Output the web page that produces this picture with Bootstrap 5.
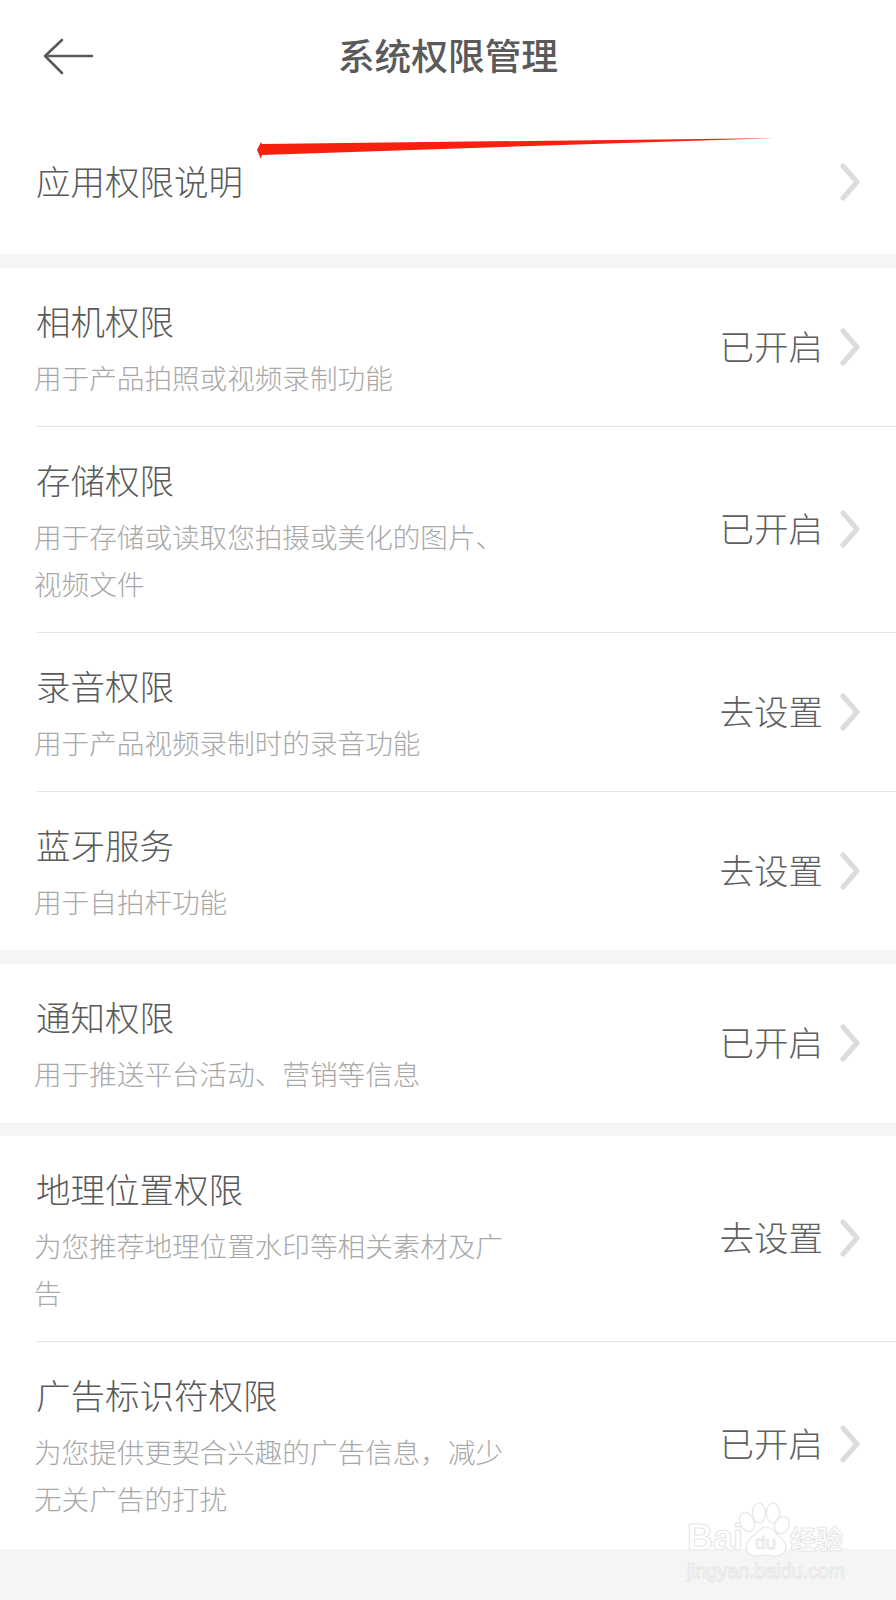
<!DOCTYPE html>
<html lang="zh-CN">
<head>
<meta charset="utf-8">
<title>系统权限管理</title>
<link href="https://cdn.jsdelivr.net/npm/bootstrap@5.3.0/dist/css/bootstrap.min.css" rel="stylesheet">
<style>
html,body{margin:0;background:#f5f5f5;}
body{font-family:"Noto Sans CJK SC","Liberation Sans",sans-serif;width:896px;height:1600px;position:relative;overflow:hidden;}
.hdr{height:112px;background:#fff;position:relative;}
.hdr-title{font-size:36.7px;font-weight:500;color:#5a5a5a;line-height:108px;text-align:center;}
.hdr-back{position:absolute;left:43px;top:38px;}
.grp{background:#fff;margin-bottom:14px;}
.grp-tight{margin-bottom:13px;}
.grp-last{margin-bottom:0;}
.rw{margin-left:37px;padding:28px 35px 25px 0;border-bottom:1px solid #e2e2e2;}
.rw:last-child{border-bottom:0;padding-bottom:25px;}
.grp-tight .rw:last-child{padding-bottom:26px;}
.grp-last .rw:last-child{padding-bottom:27px;}
.rw-plain,.rw-plain:last-child{height:142px;padding:0 35px 6px 0;border:0;}
.rw-name{font-size:34.5px;line-height:48px;color:#5a5a5a;font-weight:300;margin-left:-1px;}
.rw-sub{font-size:27.6px;line-height:47px;color:#a8a8a8;margin-top:10px;margin-left:-3px;width:482px;font-weight:300;}
.rw-end{margin-bottom:8px;}
.rw-end .chev,.rw-plain .chev{margin-top:4px;}
.rw-val{font-size:34.5px;color:#5f5f5f;font-weight:300;white-space:nowrap;margin-right:14px;line-height:48px;}
.chev{display:block;flex:none;}
.mark-arrow{position:absolute;left:0;top:0;pointer-events:none;}
.wm{position:absolute;left:680px;top:1500px;width:216px;height:100px;pointer-events:none;}
.wm-t{position:absolute;color:#fff;-webkit-text-stroke:1px #e6e6e6;font-family:"Liberation Sans",sans-serif;line-height:1;white-space:nowrap;}
.wm-bai{left:7px;top:20px;font-size:36px;font-weight:700;}
.wm-du{left:75px;top:33px;font-size:19px;}
.wm-cn{left:110px;top:25px;font-size:26.5px;font-weight:700;font-family:"Noto Sans CJK SC",sans-serif;}
.wm-url{left:7px;top:62px;font-size:19.6px;}
</style>
</head>
<body>
<header class="hdr">
  <svg class="hdr-back" width="52" height="38" viewBox="0 0 52 38" fill="none" stroke="#5a5a5a" stroke-width="2.6" stroke-linecap="round" stroke-linejoin="round"><path d="M19 2 2 18 19 35M2 18H49"/></svg>
  <div class="hdr-title">系统权限管理</div>
</header>

<section class="grp">
  <div class="rw rw-plain d-flex align-items-center justify-content-between">
    <div class="rw-name">应用权限说明</div>
    <svg class="chev" width="24" height="38" viewBox="0 0 24 38" fill="none" stroke="#dcdcdc" stroke-width="5" stroke-linecap="round" stroke-linejoin="round"><path d="M6 3 20 19 6 35"/></svg>
  </div>
</section>

<section class="grp">
  <div class="rw d-flex align-items-center justify-content-between">
    <div><div class="rw-name">相机权限</div><div class="rw-sub">用于产品拍照或视频录制功能</div></div>
    <div class="rw-end d-flex align-items-center"><span class="rw-val">已开启</span><svg class="chev" width="24" height="38" viewBox="0 0 24 38" fill="none" stroke="#dcdcdc" stroke-width="5" stroke-linecap="round" stroke-linejoin="round"><path d="M6 3 20 19 6 35"/></svg></div>
  </div>
  <div class="rw d-flex align-items-center justify-content-between">
    <div><div class="rw-name">存储权限</div><div class="rw-sub">用于存储或读取您拍摄或美化的图片、视频文件</div></div>
    <div class="rw-end d-flex align-items-center"><span class="rw-val">已开启</span><svg class="chev" width="24" height="38" viewBox="0 0 24 38" fill="none" stroke="#dcdcdc" stroke-width="5" stroke-linecap="round" stroke-linejoin="round"><path d="M6 3 20 19 6 35"/></svg></div>
  </div>
  <div class="rw d-flex align-items-center justify-content-between">
    <div><div class="rw-name">录音权限</div><div class="rw-sub">用于产品视频录制时的录音功能</div></div>
    <div class="rw-end d-flex align-items-center"><span class="rw-val">去设置</span><svg class="chev" width="24" height="38" viewBox="0 0 24 38" fill="none" stroke="#dcdcdc" stroke-width="5" stroke-linecap="round" stroke-linejoin="round"><path d="M6 3 20 19 6 35"/></svg></div>
  </div>
  <div class="rw d-flex align-items-center justify-content-between">
    <div><div class="rw-name">蓝牙服务</div><div class="rw-sub">用于自拍杆功能</div></div>
    <div class="rw-end d-flex align-items-center"><span class="rw-val">去设置</span><svg class="chev" width="24" height="38" viewBox="0 0 24 38" fill="none" stroke="#dcdcdc" stroke-width="5" stroke-linecap="round" stroke-linejoin="round"><path d="M6 3 20 19 6 35"/></svg></div>
  </div>
</section>

<section class="grp grp-tight">
  <div class="rw d-flex align-items-center justify-content-between">
    <div><div class="rw-name">通知权限</div><div class="rw-sub">用于推送平台活动、营销等信息</div></div>
    <div class="rw-end d-flex align-items-center"><span class="rw-val">已开启</span><svg class="chev" width="24" height="38" viewBox="0 0 24 38" fill="none" stroke="#dcdcdc" stroke-width="5" stroke-linecap="round" stroke-linejoin="round"><path d="M6 3 20 19 6 35"/></svg></div>
  </div>
</section>

<section class="grp grp-last">
  <div class="rw d-flex align-items-center justify-content-between">
    <div><div class="rw-name">地理位置权限</div><div class="rw-sub">为您推荐地理位置水印等相关素材及广告</div></div>
    <div class="rw-end d-flex align-items-center"><span class="rw-val">去设置</span><svg class="chev" width="24" height="38" viewBox="0 0 24 38" fill="none" stroke="#dcdcdc" stroke-width="5" stroke-linecap="round" stroke-linejoin="round"><path d="M6 3 20 19 6 35"/></svg></div>
  </div>
  <div class="rw d-flex align-items-center justify-content-between">
    <div><div class="rw-name">广告标识符权限</div><div class="rw-sub">为您提供更契合兴趣的广告信息，减少无关广告的打扰</div></div>
    <div class="rw-end d-flex align-items-center"><span class="rw-val">已开启</span><svg class="chev" width="24" height="38" viewBox="0 0 24 38" fill="none" stroke="#dcdcdc" stroke-width="5" stroke-linecap="round" stroke-linejoin="round"><path d="M6 3 20 19 6 35"/></svg></div>
  </div>
</section>

<svg class="mark-arrow" width="896" height="200" viewBox="0 0 896 200"><polygon points="257,150 261,142 262,144 776,138 262,155 261,159" fill="#f8200f"/></svg>

<div class="wm">
  <svg class="position-absolute top-0 start-0" width="216" height="100" viewBox="0 0 216 100" fill="#fff" stroke="#e6e6e6" stroke-width="1.2">
    <ellipse cx="67" cy="22" rx="7" ry="10" transform="rotate(-25 67 22)"/>
    <ellipse cx="79" cy="13" rx="6.5" ry="10"/>
    <ellipse cx="93" cy="13" rx="6.5" ry="10"/>
    <ellipse cx="102" cy="25" rx="7" ry="9" transform="rotate(25 102 25)"/>
    <path d="M86 27c-6 0-9 6-13 9-5 4-7 8-7 11 0 6 5 9 11 9 4 0 6-1 9-1s5 1 9 1c6 0 11-3 11-9 0-4-2-7-7-11-4-3-7-9-13-9z"/>
  </svg>
  <span class="wm-t wm-bai">Bai</span>
  <span class="wm-t wm-du">du</span>
  <span class="wm-t wm-cn">经验</span>
  <span class="wm-t wm-url">jingyan.baidu.com</span>
</div>
</body>
</html>
